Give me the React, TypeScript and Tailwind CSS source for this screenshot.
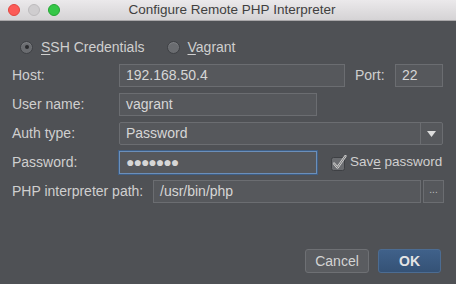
import React from 'react';

const font = { fontFamily: '"Liberation Sans", Arial, sans-serif' };

const Field: React.FC<{ value: string; className?: string; focused?: boolean }> = ({ value, className = '', focused }) => (
    <div
        className={`shrink-0 h-[23px] flex items-center px-[6px] text-[14px] text-[#d6d6d6] bg-[#56585c] border ${focused ? 'border-[#6b8fba] shadow-[0_0_0_1px_#3f5f86]' : 'border-[#6b6d71]'} ${className}`}
    >
        {value}
    </div>
);

const Label: React.FC<{ children: React.ReactNode; className?: string }> = ({ children, className = 'w-[107px]' }) => (
    <div className={`shrink-0 whitespace-nowrap text-[14px] text-[#cfcfcf] ${className}`}>{children}</div>
);

const Radio: React.FC<{ checked?: boolean }> = ({ checked }) => (
    <div className="w-[13px] h-[13px] rounded-full bg-[#6a6c70] border border-[#3e4044] flex items-center justify-center shadow-[inset_0_1px_1px_rgba(255,255,255,0.15)]">
        {checked && <div className="w-[4px] h-[4px] rounded-full bg-[#2a2b2e]" />}
    </div>
);

const CheckBox: React.FC = () => (
    <svg width="16" height="16" viewBox="0 0 16 16" className="shrink-0">
        <rect x="0.5" y="2.5" width="13" height="13" rx="2" fill="#6a6c70" stroke="#3e4044" />
        <path d="M3 8.5 L6.5 12.5 L14.5 1" fill="none" stroke="#d8d8d8" strokeWidth="2.2" strokeLinecap="round" strokeLinejoin="round" />
        <path d="M3 8.5 L6.5 12.5 L14.5 1" fill="none" stroke="#2f3033" strokeWidth="0.6" strokeLinecap="round" strokeLinejoin="round" />
    </svg>
);

const App: React.FC = () => {
    return (
        <div className="w-[456px] h-[284px] flex flex-col bg-[#4f5155] overflow-hidden" style={font}>
            {/* Title bar */}
            <div className="h-[21px] shrink-0 flex items-center relative bg-gradient-to-b from-[#ebe9eb] to-[#d5d3d5] border-b border-[#a9a7a9]">
                <div className="flex items-center gap-[8px] pl-[8px]">
                    <div className="w-[12px] h-[12px] rounded-full bg-[#fc5b57] border border-[#e2463f]" />
                    <div className="w-[12px] h-[12px] rounded-full bg-[#cfcdcf] border border-[#bdbbbd]" />
                    <div className="w-[12px] h-[12px] rounded-full bg-[#35c748] border border-[#24a634]" />
                </div>
                <div className="flex-1 text-center text-[13.5px] text-[#3f3f3f] pr-[52px]">Configure Remote PHP Interpreter</div>
            </div>

            <div className="flex-1 flex flex-col pl-[12px] pr-[13px]">
                {/* Mode */}
                <div className="flex items-center h-[14px] mt-[19px] pl-[8px] text-[14px] text-[#cfcfcf]">
                    <Radio checked />
                    <span className="ml-[8px]"><u className="underline-offset-2">S</u>SH Credentials</span>
                    <div className="ml-[22px]"><Radio /></div>
                    <span className="ml-[8px]"><u className="underline-offset-2">V</u>agrant</span>
                </div>

                <div className="flex flex-col gap-[6px] mt-[10px]">
                    <div className="flex items-center">
                        <Label>Host:</Label>
                        <Field value="192.168.50.4" className="w-[226px]" />
                        <Label className="ml-[10px] w-[40px]">Port:</Label>
                        <Field value="22" className="w-[48px]" />
                    </div>
                    <div className="flex items-center">
                        <Label>User name:</Label>
                        <Field value="vagrant" className="w-[198px]" />
                    </div>
                    <div className="flex items-center">
                        <Label>Auth type:</Label>
                        <div className="shrink-0 h-[23px] w-[324px] flex bg-[#56585c] border border-[#6b6d71] rounded-[2px] text-[14px] text-[#d6d6d6]">
                            <div className="flex-1 flex items-center px-[6px]">Password</div>
                            <div className="w-[22px] border-l border-[#6b6d71] flex items-center justify-center">
                                <svg width="9" height="6" viewBox="0 0 9 6"><path d="M0 0 H9 L4.5 6 Z" fill="#dcdcdc" /></svg>
                            </div>
                        </div>
                    </div>
                    <div className="flex items-center">
                        <Label>Password:</Label>
                        <Field value="●●●●●●●" className="w-[198px] tracking-[-1px] text-[11px]" focused />
                        <div className="ml-[14px] flex items-center shrink-0">
                            <CheckBox />
                            <span className="ml-[3px] whitespace-nowrap text-[13.5px] text-[#cfcfcf]">Sav<u className="underline-offset-2">e</u> password</span>
                        </div>
                    </div>
                    <div className="flex items-center">
                        <Label className="w-[141px]">PHP interpreter path:</Label>
                        <Field value="/usr/bin/php" className="w-[268px]" />
                        <div className="shrink-0 ml-[2px] h-[23px] w-[21px] bg-[#56585c] border border-[#6b6d71] flex items-center justify-center text-[10px] text-[#bfbfbf] leading-none pb-[3px]">...</div>
                    </div>
                </div>

                <div className="flex-1" />
                <div className="flex justify-end gap-[9px] mb-[11px] pr-[2px]">
                    <div className="w-[64px] h-[24px] flex items-center justify-center rounded-[3px] bg-[#5a5c60] border border-[#6e7074] text-[14px] text-[#d4d4d4]">Cancel</div>
                    <div className="w-[63px] h-[24px] flex items-center justify-center rounded-[3px] bg-gradient-to-b from-[#40618a] to-[#355276] border border-[#4c6c92] text-[14px] font-bold text-[#e4e4e4]">OK</div>
                </div>
            </div>
        </div>
    );
};

export default App;
